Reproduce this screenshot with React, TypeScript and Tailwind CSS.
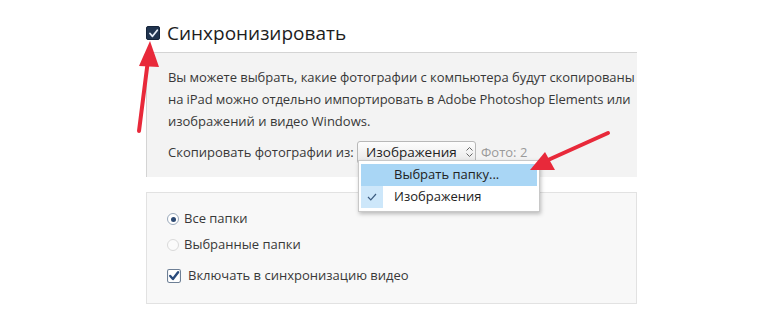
import React from "react";

function Arrows() {
  return (
    <svg className="absolute left-0 top-0 pointer-events-none" width="770" height="330" viewBox="0 0 770 330">
      <line x1="139" y1="131" x2="148" y2="60" stroke="#e8293a" strokeWidth="4" strokeLinecap="round" />
      <polygon points="150,41 139,66 159,67" fill="#e8293a" />
      <line x1="608" y1="133" x2="548" y2="160" stroke="#e8293a" strokeWidth="4" strokeLinecap="round" />
      <polygon points="530,170 545,152 555,170" fill="#e8293a" />
    </svg>
  );
}

function Check({ size = 13 }: { size?: number }) {
  return (
    <svg width={size} height={size} viewBox="0 0 13 13">
      <rect x="0.5" y="0.5" width="12" height="12" rx="1.5" fill="#fff" stroke="#6d7f95" />
      <path d="M3 6.5 L5.5 9.3 L10.3 3" fill="none" stroke="#2a4b7c" strokeWidth="2.2" strokeLinecap="round" strokeLinejoin="round" />
    </svg>
  );
}

export default function App() {
  return (
    <div
      className="relative w-[770px] h-[330px] bg-white overflow-hidden text-[#333]"
      style={{ fontFamily: '"Open Sans", "Noto Sans", sans-serif' }}
    >
      <div className="pl-[146px] pt-[20px]">
        <div className="flex items-center h-[26px]">
          <div className="w-[14px] h-[14px] bg-[#20344f] rounded-[2px] flex items-center justify-center border border-[#15253b]">
            <svg width="11" height="11" viewBox="0 0 11 11">
              <path d="M2 5.5 L4.5 8.3 L9.3 2.3" fill="none" stroke="#e6eef8" strokeWidth="1.8" strokeLinecap="round" strokeLinejoin="round" />
            </svg>
          </div>
          <span className="ml-[7px] text-[19px] text-[#1d1d1d] leading-none">Синхронизировать</span>
        </div>

        <div className="mt-[6px] w-[491px] h-[125px] border-t border-l border-[#d4d4d4] bg-[#f3f3f3] overflow-hidden">
          <div className="pl-[21px] pt-[13px] text-[13px] leading-[22px] text-[#383838] whitespace-nowrap">
            <div className="tracking-[-0.05px]">Вы можете выбрать, какие фотографии с компьютера будут скопированы</div>
            <div className="tracking-[-0.08px]">на iPad можно отдельно импортировать в Adobe Photoshop Elements или</div>
            <div>изображений и видео Windows.</div>
            <div className="flex items-center mt-[8px] h-[24px]">
              <span className="w-[184px]">Скопировать фотографии из:</span>
              <div className="ml-[5px] w-[119px] h-[23px] rounded-[3px] border border-[#b8b8b8] bg-gradient-to-b from-[#fdfdfd] to-[#e8e8e8] flex items-center pl-[8px] text-[#222] text-[13.5px]">
                <span>Изображения</span>
                <svg className="ml-[8px]" width="9" height="12" viewBox="0 0 9 12">
                  <path d="M1.5 4.5 L4.5 1.5 L7.5 4.5 M1.5 7.5 L4.5 10.5 L7.5 7.5" fill="none" stroke="#666" strokeWidth="1" />
                </svg>
              </div>
              <span className="ml-[5px] text-[#9a9a9a]">Фото: 2</span>
            </div>
          </div>
        </div>

        <div className="mt-[15px] w-[491px] h-[112px] border border-[#e2e2e2] bg-[#f8f8f8] pl-[20px] pt-[14px] text-[13px] text-[#383838]">
          <div className="flex items-center h-[24px]">
            <span className="w-[12px] h-[12px] rounded-full border border-[#9aa9bb] bg-[#fff] flex items-center justify-center">
              <span className="w-[5px] h-[5px] rounded-full bg-[#2d4a73]" />
            </span>
            <span className="ml-[5px]">Все папки</span>
          </div>
          <div className="flex items-center h-[24px] mt-[2px]">
            <span className="w-[12px] h-[12px] rounded-full border border-[#dadada] bg-[#fbfbfb]" />
            <span className="ml-[5px]">Выбранные папки</span>
          </div>
          <div className="flex items-center h-[24px] mt-[7px]">
            <Check size={14} />
            <span className="ml-[7px]">Включать в синхронизацию видео</span>
          </div>
        </div>
      </div>

      <div className="absolute left-[358px] top-[160px] w-[182px] h-[52px] bg-white border border-[#c8c8c8] shadow-[1px_2px_4px_rgba(0,0,0,0.25)] py-[3px] px-[2px] text-[13px] text-[#222]">
        <div className="h-[22px] bg-[#a9d6f5] flex items-center pl-[33px]">Выбрать папку...</div>
        <div className="h-[22px] flex items-center">
          <span className="w-[22px] h-[22px] bg-[#cde7fa] flex items-center justify-center">
            <svg width="10" height="8" viewBox="0 0 10 8">
              <path d="M1 4 L3.8 6.8 L9 1" fill="none" stroke="#3d5c80" strokeWidth="1.2" />
            </svg>
          </span>
          <span className="ml-[11px]">Изображения</span>
        </div>
      </div>

      <Arrows />
    </div>
  );
}
